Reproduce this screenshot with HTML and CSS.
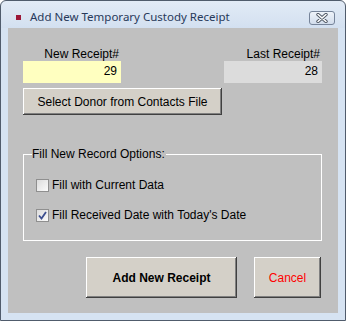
FILE: index.html
```html
<!DOCTYPE html>
<html lang="en">
<head>
  <meta charset="UTF-8">
  <title>Add New Temporary Custody Receipt</title>
  <link rel="stylesheet" href="styles.css">
</head>
<body>
  <div class="window">
    <div class="titlebar">
      <span class="app-icon"></span>
      <span class="title">Add New Temporary Custody Receipt</span>
      <button class="close-btn" aria-label="Close">
        <svg width="12" height="10" viewBox="0 0 12 10">
          <path d="M2 1.5 L10 8.5 M10 1.5 L2 8.5" stroke="#4d5663" stroke-width="3.4" stroke-linecap="round"/>
          <path d="M2 1.5 L10 8.5 M10 1.5 L2 8.5" stroke="#fff" stroke-width="1.6" stroke-linecap="round"/>
        </svg>
      </button>
    </div>

    <div class="client">
      <div class="receipt-row">
        <div class="field">
          <label>New Receipt#</label>
          <div class="box box-new">29</div>
        </div>
        <div class="field">
          <label>Last Receipt#</label>
          <div class="box box-last">28</div>
        </div>
      </div>

      <button class="btn btn-select">Select Donor from Contacts File</button>

      <fieldset class="options">
        <legend>Fill New Record Options:</legend>
        <div class="check-row">
          <span class="checkbox"></span>
          <span>Fill with Current Data</span>
        </div>
        <div class="check-row">
          <span class="checkbox">
            <svg width="9" height="9" viewBox="0 0 9 9">
              <path d="M1 4.5 L3.5 7.5 L8 1" fill="none" stroke="#3d4f8f" stroke-width="1.8"/>
            </svg>
          </span>
          <span>Fill Received Date with Today's Date</span>
        </div>
      </fieldset>

      <div class="actions">
        <button class="btn btn-add">Add New Receipt</button>
        <button class="btn btn-cancel">Cancel</button>
      </div>
    </div>
  </div>
</body>
</html>
```

FILE: styles.css
```css
* {
  box-sizing: border-box;
  margin: 0;
  padding: 0;
}

body {
  background-color: #fff;
  font-family: "Liberation Sans", Arial, sans-serif;
  font-size: 12px;
  color: #000;
}

.window {
  width: 346px;
  height: 321px;
  border: 1px solid #505c6c;
  border-radius: 6px 6px 0 0;
  background: linear-gradient(#e2ebf6 0, #d3e0f0 27px, #d6e3f2 27px);
  padding: 0 7px 7px 7px;
  display: flex;
  flex-direction: column;
}

.titlebar {
  height: 27px;
  display: flex;
  align-items: center;
}

.app-icon {
  width: 5px;
  height: 5px;
  background-color: #9c1838;
  margin-left: 8px;
  margin-right: 9px;
  margin-top: 5px;
}

.title {
  font-family: "Noto Sans", sans-serif;
  font-size: 11.5px;
  color: #27395a;
  flex: 1;
  padding-top: 3px;
}

.close-btn {
  width: 26px;
  height: 14px;
  margin-right: 3px;
  margin-top: 7px;
  border: 1px solid #76849a;
  border-radius: 3px;
  background: linear-gradient(#eef3f9, #d2ddec);
  display: flex;
  align-items: center;
  justify-content: center;
}

.client {
  flex: 1;
  background-color: #c0c0c0;
  padding: 19px 16px 0 15px;
  display: flex;
  flex-direction: column;
}

.receipt-row {
  display: flex;
  justify-content: space-between;
}

.field {
  width: 98px;
  display: flex;
  flex-direction: column;
}

.field label {
  text-align: right;
  line-height: 14px;
  padding-right: 2px;
}

.box {
  height: 22px;
  line-height: 20px;
  text-align: right;
  padding-right: 4px;
}

.box-new {
  background-color: #ffffc0;
}

.box-last {
  background-color: #dcdcdc;
}

.btn {
  font-family: "Liberation Sans", Arial, sans-serif;
  font-size: 12px;
  color: #000;
  background-color: #d4d0c8;
  border: none;
  box-shadow: inset -1px -1px #404040, inset 1px 1px #fff, inset -2px -2px #808080;
}

.btn-select {
  width: 199px;
  height: 27px;
  margin-top: 5px;
}

.options {
  width: 299px;
  margin-top: 32px;
  border: 1px solid #fff;
  padding: 17px 0 18px 0;
  display: flex;
  flex-direction: column;
  gap: 16px;
}

.options legend {
  margin-left: 8px;
  padding: 0 1px 0 0;
  line-height: 14px;
}

.check-row {
  display: flex;
  align-items: center;
  gap: 3px;
  line-height: 14px;
  margin-left: 12px;
}

.checkbox {
  width: 13px;
  height: 13px;
  border: 1px solid #8f8f8f;
  background: linear-gradient(135deg, #dcdcdc, #fbfbfb);
  display: flex;
  align-items: center;
  justify-content: center;
}

.actions {
  display: flex;
  justify-content: flex-end;
  gap: 17px;
  margin-top: 16px;
  padding-right: 1px;
}

.btn-add {
  width: 151px;
  height: 41px;
  font-weight: bold;
}

.btn-cancel {
  width: 67px;
  height: 41px;
  color: #ff0000;
}
```
